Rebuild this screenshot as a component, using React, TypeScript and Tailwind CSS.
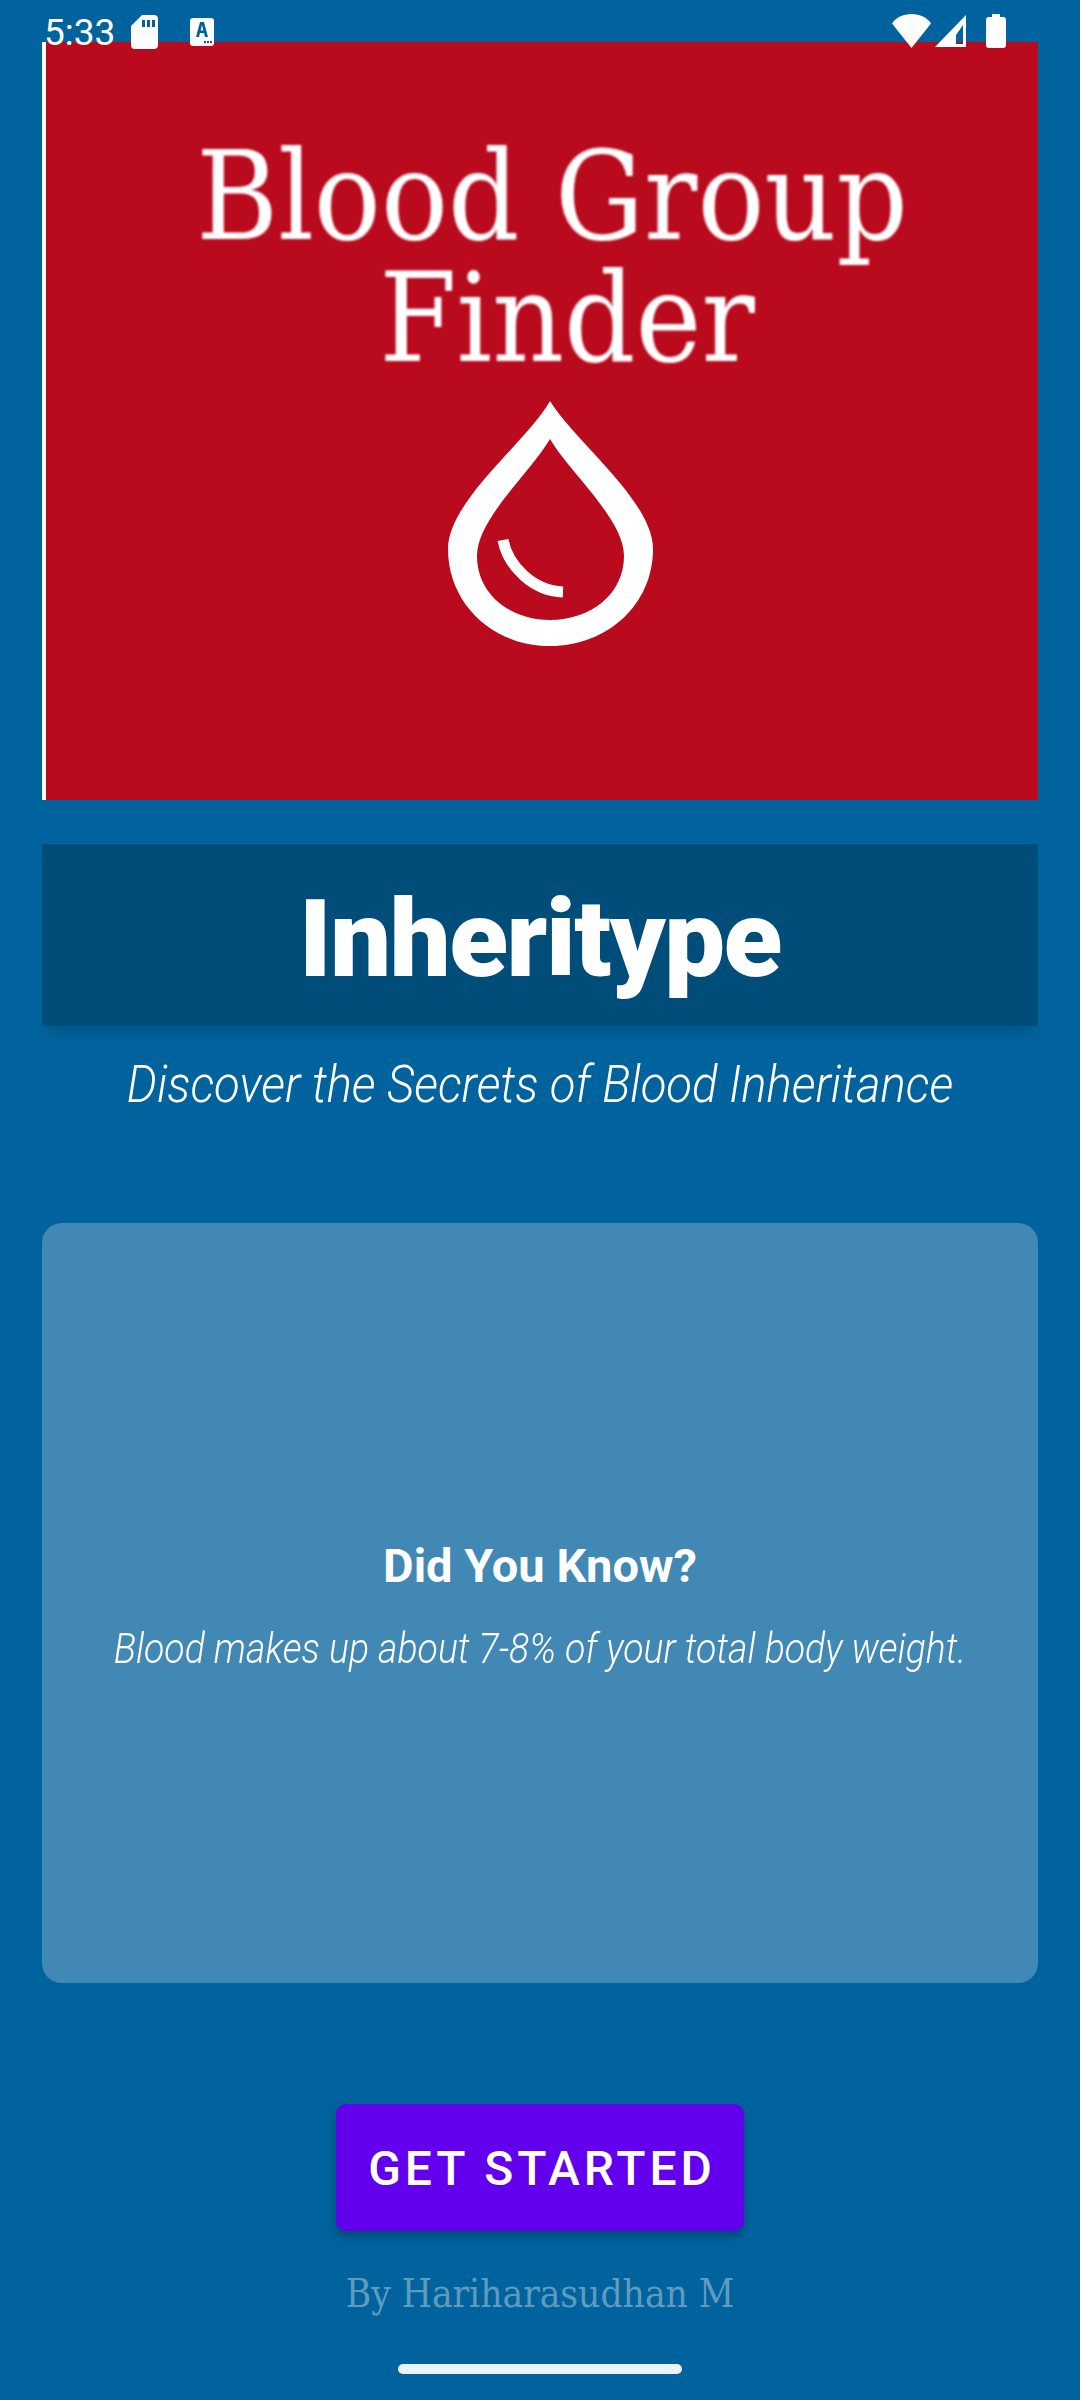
import React from "react";

const StatusBar = () => (
    <div className="absolute top-0 left-0 w-full h-[60px] text-white">
        <span className="absolute left-[44px] top-[12px] text-[37px] leading-[42px] font-['Roboto',sans-serif] text-white">5:33</span>
        {/* sd card */}
        <svg className="absolute left-[131px] top-[15px]" width="27" height="34" viewBox="0 0 27 34">
            <path fillRule="evenodd" fill="#fff" d="M11 0H23a4 4 0 0 1 4 4V30a4 4 0 0 1-4 4H4a4 4 0 0 1-4-4V11ZM11 5v7h3V5ZM16 5v7h3V5ZM21 5v7h3V5Z" />
        </svg>
        {/* keyboard / A */}
        <svg className="absolute left-[190px] top-[18px]" width="24" height="28" viewBox="0 0 24 28">
            <path fillRule="evenodd" fill="#fff" d="M3 0H21a3 3 0 0 1 3 3V25a3 3 0 0 1-3 3H3a3 3 0 0 1-3-3V3a3 3 0 0 1 3-3ZM10 4 6 19H9L10 15H14L15 19H18L14 4ZM10.700 12.500 12 7 13.300 12.500ZM14 23v2h2v-2ZM17 23v2h2v-2ZM20 23v2h2v-2Z" />
        </svg>
        {/* wifi */}
        <svg className="absolute left-[892px] top-[14px]" width="39" height="34" viewBox="0 0 39 34">
            <path fill="#fff" d="M19.500 34 0 9.500C4 3.500 11 0 19.500 0S35 3.500 39 9.500Z" />
        </svg>
        {/* signal */}
        <svg className="absolute left-[935px] top-[15px]" width="31" height="32" viewBox="0 0 31 32">
            <path fillRule="evenodd" fill="#fff" d="M31 0V32H0ZM28 10 21 20V29H28Z" />
        </svg>
        {/* battery */}
        <svg className="absolute left-[986px] top-[14px]" width="20" height="34" viewBox="0 0 20 34">
            <path fill="#fff" d="M6 0H14V3H17a3 3 0 0 1 3 3V31a3 3 0 0 1-3 3H3a3 3 0 0 1-3-3V6a3 3 0 0 1 3-3H6Z" />
        </svg>
    </div>
);

const Logo = () => (
    <div className="h-[758px] bg-[#b90a1e] border-l-4 border-white pl-[20px] flex flex-col items-center">
        <div className="mt-[93px] text-center text-white font-['DejaVu_Serif_Condensed','DejaVu_Serif',serif] [font-stretch:condensed] text-[124px] leading-[122px] blur-[1px] whitespace-nowrap">
            <div>Blood Group</div>
            <div className="pl-[30px]">Finder</div>
        </div>
        <svg className="mt-[22px] mr-[3px] blur-[0.6px]" width="205" height="245" viewBox="0 0 205 245">
            <path
                fillRule="evenodd"
                fill="#fff"
                d="M102 0C128 42 205 100 205 148C205 203 160 245 102 245C45 245 0 203 0 148C0 100 78 42 102 0ZM102 38C82 72 29 118 29 155C29 193 62 219 102 219C143 219 176 193 176 155C176 118 122 72 102 38Z"
            />
            <path d="M55 139C60 165 85 190 115 191" fill="none" stroke="#fff" strokeWidth="11" />
        </svg>
    </div>
);

export default function App() {
    return (
        <div className="relative w-[1080px] h-[2400px] bg-[#01639d] overflow-hidden font-['Roboto',sans-serif]">
            <div className="flex flex-col px-[42px] pt-[42px]">
                <Logo />

                <div className="mt-[44px] h-[182px] pt-[8px] bg-[#014d79] shadow-[0_14px_12px_-6px_rgba(0,0,0,0.12)] flex items-center justify-center">
                    <h1 className="text-white font-black text-[108px] leading-none text-center tracking-[-1.500px]">Inheritype</h1>
                </div>

                <p className="mt-[28px] h-[62px] text-white font-light italic text-[52px] leading-[62px] text-center whitespace-nowrap scale-x-[0.91]">
                    Discover the Secrets of Blood Inheritance
                </p>

                <div className="mt-[107px] h-[760px] pt-[6px] bg-[#4188b5] rounded-[20px] flex flex-col items-center justify-center">
                    <h2 className="text-white font-bold text-[47px] leading-[54px]">Did You Know?</h2>
                    <p className="mt-[32px] text-white font-light italic text-[42px] leading-[48px] whitespace-nowrap scale-x-[0.89]">
                        Blood makes up about 7-8% of your total body weight.
                    </p>
                </div>

                <button className="mt-[121px] self-center w-[408px] h-[127px] bg-[#6200ee] rounded-[10px] text-white font-medium text-[48px] tracking-[3.900px] pt-[3px] pl-[4px] shadow-[0_6px_10px_rgba(0,0,0,0.25)]">
                    GET STARTED
                </button>

                <p className="mt-[40px] text-center text-[#5f9bbf] text-[38.500px] leading-[46px] font-['DejaVu_Serif_Condensed','DejaVu_Serif',serif] [font-stretch:condensed] whitespace-nowrap">
                    By Hariharasudhan M
                </p>
            </div>

            <StatusBar />
            <div className="absolute left-[398px] top-[2364px] w-[284px] h-[10px] rounded-full bg-[#ecf3f6]" />
        </div>
    );
}
